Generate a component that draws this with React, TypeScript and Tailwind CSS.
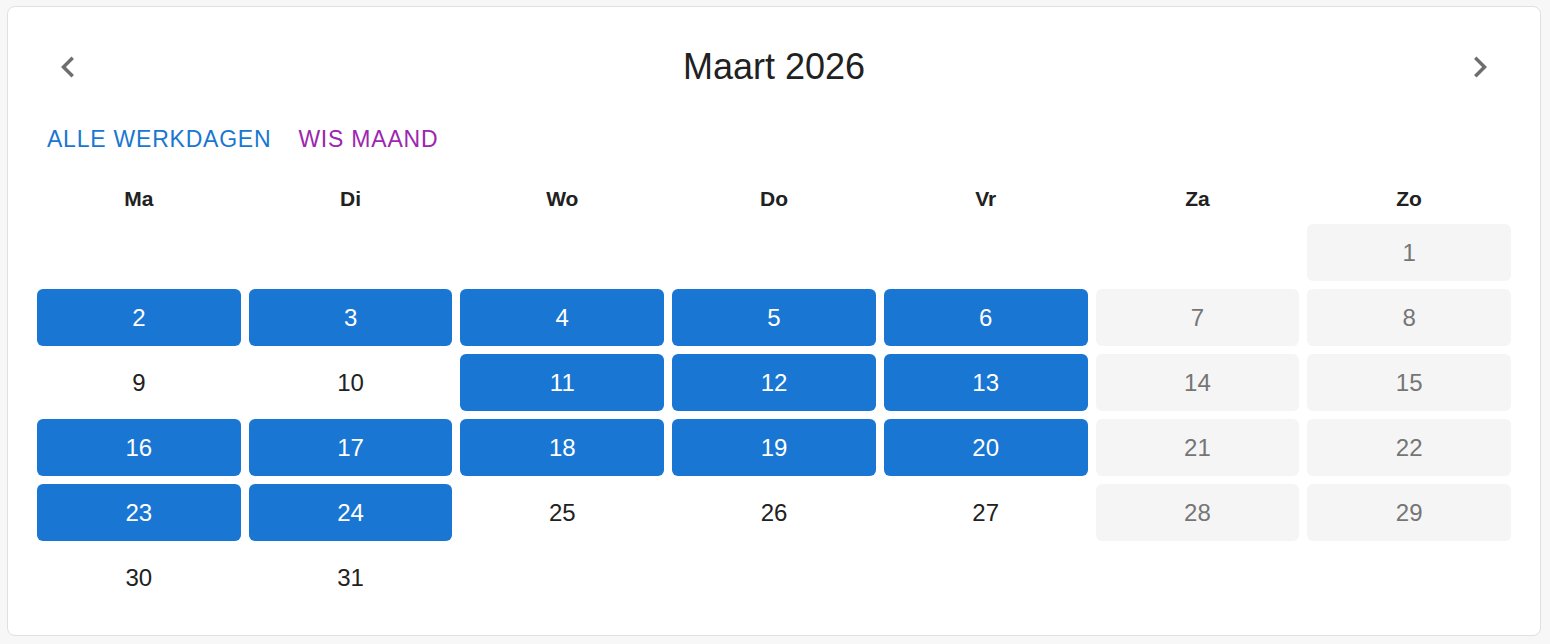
import { ReactNode } from "react";

type DayState = "selected" | "weekend" | "plain";

const WEEKDAYS = ["Ma", "Di", "Wo", "Do", "Vr", "Za", "Zo"];

// maart 2026 begint op zondag, dus 6 lege vakjes vooraf
const LEADING_BLANKS = 6;
const DAYS_IN_MONTH = 31;
const SELECTED = [2, 3, 4, 5, 6, 11, 12, 13, 16, 17, 18, 19, 20, 23, 24];

const font = "font-['Liberation_Sans',Arial,sans-serif]";

const stateFor = (day: number): DayState => {
  const col = (LEADING_BLANKS + day - 1) % 7;
  if (col >= 5) return "weekend";
  if (SELECTED.includes(day)) return "selected";
  return "plain";
};

const Chevron = ({ dir }: { dir: "left" | "right" }) => (
  <svg viewBox="0 0 24 24" className="w-[42px] h-[42px] fill-[#6e6e6e]">
    {dir === "left" ? (
      <path d="M15.41 7.41 14 6l-6 6 6 6 1.41-1.41L10.83 12z" />
    ) : (
      <path d="M10 6 8.59 7.41 13.17 12l-4.58 4.59L10 18l6-6z" />
    )}
  </svg>
);

const DayCell = ({ day }: { day: number }) => {
  const state = stateFor(day);
  let cls = "text-[#212121]";
  if (state === "selected") cls = "bg-[#1976d2] text-white";
  if (state === "weekend") cls = "bg-[#f5f5f5] text-[#757575]";
  return (
    <div className={`h-[57px] rounded-[6px] flex items-center justify-center text-[24px] ${cls}`}>
      {day}
    </div>
  );
};

const TextButton = ({ children, color }: { children: ReactNode; color: string }) => (
  <button className={`px-[10px] h-[50px] flex items-center uppercase text-[23px] tracking-[0.78px] ${color}`}>
    {children}
  </button>
);

export default function App() {
  const cells: (number | null)[] = [
    ...Array.from({ length: LEADING_BLANKS }, () => null),
    ...Array.from({ length: DAYS_IN_MONTH }, (_, i) => i + 1),
  ];

  return (
    <div className={`min-h-[644px] bg-[#f7f7f7] pl-[7px] pr-[9px] pt-[6px] ${font}`}>
      <div className="h-[630px] bg-white border border-[#e0e0e0] rounded-[8px] px-[29px] pt-[30px]">
        {/* kop met maand en pijlen */}
        <div className="h-[60px] flex items-center justify-between">
          <button className="w-[60px] h-[60px] flex items-center justify-center ml-[1px]">
            <Chevron dir="left" />
          </button>
          <h2 className="text-[36px] text-[#212121] leading-none">Maart 2026</h2>
          <button className="w-[60px] h-[60px] flex items-center justify-center mr-[1px]">
            <Chevron dir="right" />
          </button>
        </div>

        <div className="mt-[17px] flex gap-[7px]">
          <TextButton color="text-[#1976d2]">Alle werkdagen</TextButton>
          <TextButton color="text-[#9c27b0]">Wis maand</TextButton>
        </div>

        <div className="mt-[15px] grid grid-cols-7 gap-x-2 h-[40px] items-center">
          {WEEKDAYS.map((w) => (
            <div key={w} className="text-center font-bold text-[21px] text-[#212121]">
              {w}
            </div>
          ))}
        </div>

        <div className="mt-[5px] grid grid-cols-7 gap-2">
          {cells.map((d, i) =>
            d === null ? <div key={`b${i}`} className="h-[57px]" /> : <DayCell key={d} day={d} />
          )}
        </div>
      </div>
    </div>
  );
}
